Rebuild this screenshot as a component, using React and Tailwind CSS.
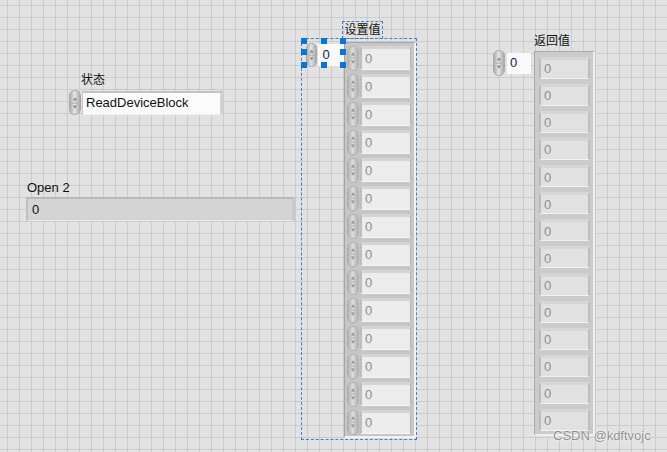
import React from 'react';

const font = "font-['Liberation_Sans','Noto_Sans_CJK_SC',sans-serif]";

const Arrows = () => (
  <svg width="12" height="24" viewBox="0 0 12 24" className="block">
    <path d="M6 5 L8.5 9 L3.5 9 Z" fill="#8a8a8a" />
    <line x1="2" y1="12" x2="10" y2="12" stroke="#a0a0a0" strokeWidth="1" />
    <path d="M3.5 15 L8.5 15 L6 19 Z" fill="#8a8a8a" />
  </svg>
);

const Spin = ({ className = '' }) => (
  <div
    className={`flex items-center justify-center w-[12px] rounded-full border border-[#a8a8a8] bg-[linear-gradient(to_right,#adadad,#e4e4e4_45%,#d6d6d6_60%,#a9a9a9)] overflow-hidden ${className}`}
  >
    <Arrows />
  </div>
);

const Handle = ({ className }) => (
  <div className={`absolute w-[6px] h-[6px] bg-[#0a74d8] ${className}`} />
);

const SetElement = () => (
  <div className="flex items-center h-[24px]">
    <Spin className="h-[25px] mr-[1px] opacity-75" />
    <div className="w-[51px] h-[24px] bg-[#ececec] border-t-[3px] border-l-[2px] border-t-[#d3d3d3] border-l-[#bdbdbd] border-r border-b border-r-[#b3b3b3] border-b-[#f6f6f6] flex items-center pl-[3px] text-[13px] text-[#8d8d95]">
      0
    </div>
  </div>
);

const ReturnElement = () => (
  <div className="w-[51px] h-[22px] bg-[#e1e1e1] border-t-[3px] border-l-[2px] border-t-[#d6d6d6] border-l-[#bcbcbc] border-r-[2px] border-b border-r-[#bdbdbd] border-b-[#f2f2f2] flex items-center pl-[3px] text-[13px] text-[#8d8d95]">
    0
  </div>
);

export default function App() {
  const items = Array.from({ length: 14 }, (_, i) => i);

  return (
    <div
      className={`relative w-[667px] h-[452px] overflow-hidden bg-[#e2e2e2] bg-[linear-gradient(to_right,#cbcbcb_1px,transparent_1px),linear-gradient(to_bottom,#cbcbcb_1px,transparent_1px)] bg-[size:12px_12px] bg-[position:7px_5px] ${font} text-[#111]`}
    >
      {/* 状态 enum */}
      <div className="absolute left-[69px] top-[73px] flex flex-col">
        <div className="ml-[12px] h-[17px] text-[12px] leading-[14px]">状态</div>
        <div className="flex items-center">
          <Spin className="h-[25px]" />
          <div className="ml-[1px] w-[141px] h-[24px] bg-[#fbfbfb] border-t-[2px] border-l border-t-[#c4c4c4] border-l-[#c8c8c8] border-r-[3px] border-b border-r-[#d2d2d2] border-b-[#eeeeee] flex items-center pl-[3px] text-[13px]">
            ReadDeviceBlock
          </div>
        </div>
      </div>

      {/* Open 2 */}
      <div className="absolute left-[26px] top-[180px] flex flex-col">
        <div className="ml-[1px] h-[17px] text-[13px] leading-[15px]">Open 2</div>
        <div className="w-[269px] h-[24px] bg-[#d4d4d4] border-t-[2px] border-l-[2px] border-t-[#bababa] border-l-[#c0c0c0] border-r-[3px] border-b border-r-[#c8c8c8] border-b-[#ececec] flex items-center pl-[4px] text-[13px]">
          0
        </div>
      </div>

      {/* 设置值 array (selected) */}
      <div className="absolute left-[301px] top-[21px] flex flex-col">
        <div className="ml-[41px] w-[41px] h-[18px] -mb-[1px] border border-dashed border-[#3d82c8] flex items-center justify-center text-[12px] leading-[14px]">
          设置值
        </div>
        <div className="w-[116px] h-[402px] border border-dashed border-[#3d82c8] flex items-start">
          <div className="relative w-[42px] h-[28px] shrink-0">
            <div className="flex items-center pl-[4px] pt-[4px]">
              <Spin className="h-[24px]" />
              <div className="ml-[1px] w-[27px] h-[22px] bg-[#fafafa] flex items-center pl-[4px] text-[13px] text-[#18184a]">
                0
              </div>
            </div>
            <Handle className="-left-[1px] -top-[1px]" />
            <Handle className="left-[19px] -top-[1px]" />
            <Handle className="left-[38px] -top-[1px]" />
            <Handle className="-left-[1px] top-[10px]" />
            <Handle className="left-[38px] top-[10px]" />
            <Handle className="-left-[1px] top-[23px]" />
            <Handle className="left-[19px] top-[23px]" />
            <Handle className="left-[38px] top-[23px]" />
          </div>
          <div className="mt-[3px] w-[72px] h-[396px] bg-[#c6c6c6] border-t border-l border-[#a6a6a6] border-r-[2px] border-b-[2px] border-r-[#f2f2f2] border-b-[#f2f2f2] flex flex-col gap-[4px] pl-[2px] pt-[3px]">
            {items.map((i) => (
              <SetElement key={i} />
            ))}
          </div>
        </div>
      </div>

      {/* 返回值 array */}
      <div className="absolute left-[493px] top-[34px] flex items-start">
        <div className="mt-[16px] w-[41px] flex items-center">
          <Spin className="h-[26px]" />
          <div className="ml-[2px] w-[24px] h-[21px] bg-[#fafafa] flex items-center pl-[3px] text-[13px] text-[#18184a]">
            0
          </div>
        </div>
        <div className="flex flex-col">
          <div className="h-[17px] text-[12px] leading-[14px]">返回值</div>
          <div className="w-[61px] h-[385px] bg-[#cbcbcb] border-t border-l border-[#a9a9a9] border-r-[2px] border-b-[2px] border-r-[#efefef] border-b-[#efefef] pl-[4px] pt-[5px] pb-[2px]">
            <div className="h-[374px] flex flex-col justify-between">
              {items.map((i) => (
                <ReturnElement key={i} />
              ))}
            </div>
          </div>
        </div>
      </div>

      {/* watermark */}
      <div className="absolute left-[553px] top-[428px] text-[13px] leading-[15px] text-[#8e8e8e] [text-shadow:0_0_2px_#ffffff,0_0_1px_#ffffff]">
        CSDN @kdftvojc
      </div>
    </div>
  );
}
